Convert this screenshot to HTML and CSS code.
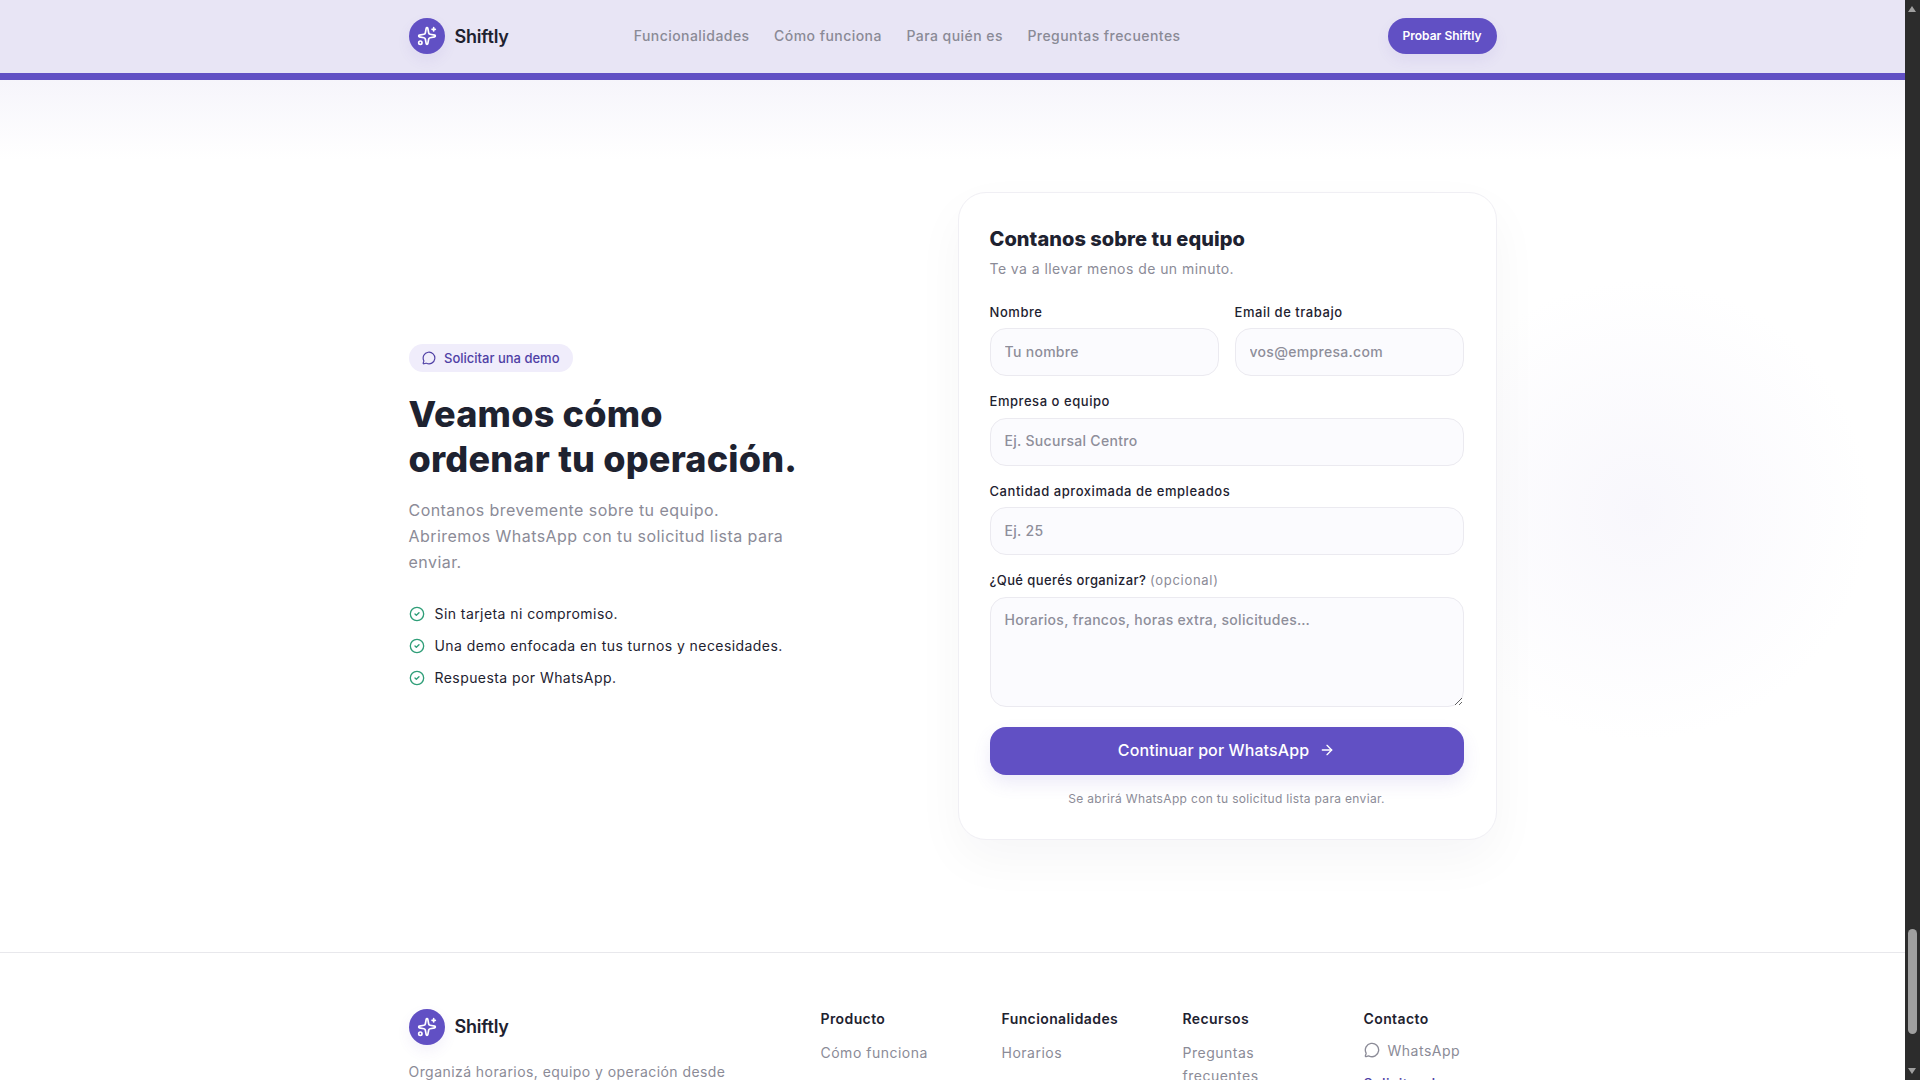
FILE: index.html
```html
<!DOCTYPE html>
<html lang="es">
<head>
    <meta charset="UTF-8">
    <meta name="viewport" content="width=device-width, initial-scale=1.0">
    <title>Shiftly - Solicitar una demo</title>
    <link rel="stylesheet" href="styles.css">
</head>
<body>
    <div class="window">
        <div class="page">
            <header class="site-header">
                <div class="container header-row">
                    <a class="brand" href="#">
                        <span class="brand-mark">
                            <svg class="icon-20" viewBox="0 0 24 24"><path d="M11.017 2.814a1 1 0 0 1 1.966 0l1.051 5.558a2 2 0 0 0 1.594 1.594l5.558 1.051a1 1 0 0 1 0 1.966l-5.558 1.051a2 2 0 0 0-1.594 1.594l-1.051 5.558a1 1 0 0 1-1.966 0l-1.051-5.558a2 2 0 0 0-1.594-1.594l-5.558-1.051a1 1 0 0 1 0-1.966l5.558-1.051a2 2 0 0 0 1.594-1.594z"/><path d="M20 2v4"/><path d="M22 4h-4"/><circle cx="4" cy="20" r="2"/></svg>
                        </span>
                        <span class="brand-name">Shiftly</span>
                    </a>
                    <nav class="main-nav">
                        <a href="#">Funcionalidades</a>
                        <a href="#">Cómo funciona</a>
                        <a href="#">Para quién es</a>
                        <a href="#">Preguntas frecuentes</a>
                    </nav>
                    <a class="header-cta" href="#">Probar Shiftly</a>
                </div>
            </header>

            <main class="demo-section">
                <div class="container demo-grid">
                    <div class="demo-intro">
                        <span class="badge">
                            <svg class="icon-14" viewBox="0 0 24 24"><path d="M2.992 16.342a2 2 0 0 1 .094 1.167l-1.065 3.29a1 1 0 0 0 1.236 1.168l3.413-.998a2 2 0 0 1 1.099.092 10 10 0 1 0-4.777-4.719"/></svg>
                            Solicitar una demo
                        </span>
                        <h1>Veamos cómo<br>ordenar tu operación.</h1>
                        <p class="lead">Contanos brevemente sobre tu equipo.<br>Abriremos WhatsApp con tu solicitud lista para enviar.</p>
                        <ul class="checks">
                            <li><svg class="icon-16" viewBox="0 0 24 24"><circle cx="12" cy="12" r="10"/><path d="m9 12 2 2 4-4"/></svg>Sin tarjeta ni compromiso.</li>
                            <li><svg class="icon-16" viewBox="0 0 24 24"><circle cx="12" cy="12" r="10"/><path d="m9 12 2 2 4-4"/></svg>Una demo enfocada en tus turnos y necesidades.</li>
                            <li><svg class="icon-16" viewBox="0 0 24 24"><circle cx="12" cy="12" r="10"/><path d="m9 12 2 2 4-4"/></svg>Respuesta por WhatsApp.</li>
                        </ul>
                    </div>

                    <form class="demo-card">
                        <h2>Contanos sobre tu equipo</h2>
                        <p class="card-sub">Te va a llevar menos de un minuto.</p>
                        <div class="field-row">
                            <div class="field">
                                <label for="nombre">Nombre</label>
                                <input id="nombre" type="text" placeholder="Tu nombre">
                            </div>
                            <div class="field">
                                <label for="email">Email de trabajo</label>
                                <input id="email" type="email" placeholder="vos@empresa.com">
                            </div>
                        </div>
                        <div class="field">
                            <label for="empresa">Empresa o equipo</label>
                            <input id="empresa" type="text" placeholder="Ej. Sucursal Centro">
                        </div>
                        <div class="field">
                            <label for="cantidad">Cantidad aproximada de empleados</label>
                            <input id="cantidad" type="text" placeholder="Ej. 25">
                        </div>
                        <div class="field">
                            <label class="label-tight" for="mensaje">¿Qué querés organizar? <span class="optional">(opcional)</span></label>
                            <textarea id="mensaje" placeholder="Horarios, francos, horas extra, solicitudes…"></textarea>
                        </div>
                        <button class="submit" type="button">
                            Continuar por WhatsApp
                            <svg class="icon-16" viewBox="0 0 24 24"><path d="M5 12h14"/><path d="m12 5 7 7-7 7"/></svg>
                        </button>
                        <p class="form-note">Se abrirá WhatsApp con tu solicitud lista para enviar.</p>
                    </form>
                </div>
            </main>

            <footer class="site-footer">
                <div class="container footer-grid">
                    <div>
                        <a class="brand" href="#">
                            <span class="brand-mark">
                                <svg class="icon-20" viewBox="0 0 24 24"><path d="M11.017 2.814a1 1 0 0 1 1.966 0l1.051 5.558a2 2 0 0 0 1.594 1.594l5.558 1.051a1 1 0 0 1 0 1.966l-5.558 1.051a2 2 0 0 0-1.594 1.594l-1.051 5.558a1 1 0 0 1-1.966 0l-1.051-5.558a2 2 0 0 0-1.594-1.594l-5.558-1.051a1 1 0 0 1 0-1.966l5.558-1.051a2 2 0 0 0 1.594-1.594z"/><path d="M20 2v4"/><path d="M22 4h-4"/><circle cx="4" cy="20" r="2"/></svg>
                            </span>
                            <span class="brand-name">Shiftly</span>
                        </a>
                        <p class="footer-text">Organizá horarios, equipo y operación desde un solo lugar.</p>
                    </div>
                    <div class="footer-col">
                        <h4>Producto</h4>
                        <a href="#">Cómo funciona</a>
                    </div>
                    <div class="footer-col">
                        <h4>Funcionalidades</h4>
                        <a href="#">Horarios</a>
                    </div>
                    <div class="footer-col">
                        <h4>Recursos</h4>
                        <a href="#">Preguntas frecuentes</a>
                    </div>
                    <div class="footer-col">
                        <h4>Contacto</h4>
                        <a class="contact-link" href="#">
                            <svg class="icon-16" viewBox="0 0 24 24"><path d="M2.992 16.342a2 2 0 0 1 .094 1.167l-1.065 3.29a1 1 0 0 0 1.236 1.168l3.413-.998a2 2 0 0 1 1.099.092 10 10 0 1 0-4.777-4.719"/></svg>
                            WhatsApp
                        </a>
                        <a class="accent-link" href="#">Solicitar demo</a>
                    </div>
                </div>
            </footer>
        </div>

        <div class="scrollbar">
            <span class="arrow-up"></span>
            <span class="thumb"></span>
            <span class="arrow-down"></span>
        </div>
    </div>
</body>
</html>
```

FILE: styles.css
```css
* { box-sizing: border-box; }
html, body { height: 100%; }
body {
    margin: 0;
    overflow: hidden;
    font-family: Inter, "Noto Sans", sans-serif;
    color: #1e2230;
    background: #fff;
}
a { color: inherit; text-decoration: none; }
svg {
    fill: none;
    stroke: currentColor;
    stroke-width: 2;
    stroke-linecap: round;
    stroke-linejoin: round;
    flex: none;
}
.icon-14 { width: 14px; height: 14px; }
.icon-16 { width: 16px; height: 16px; }
.icon-20 { width: 20px; height: 20px; }

.window { display: flex; height: 1080px; }
.page { flex: 1; min-width: 0; height: 1080px; overflow: hidden; }
.container { width: 1088px; margin: 0 auto; }

/* header */
.site-header {
    height: 80px;
    background: #e8e5f5;
    border-bottom: 7px solid #6150c4;
}
.header-row { display: flex; align-items: center; height: 72px; }
.brand { display: flex; align-items: center; gap: 10px; }
.brand-mark {
    display: flex;
    align-items: center;
    justify-content: center;
    width: 36px;
    height: 36px;
    border-radius: 50%;
    background: #6150c4;
    color: #fff;
    box-shadow: 0 6px 14px rgba(97,80,196,0.08);
}
.brand-name { font-size: 18px; font-weight: 600; letter-spacing: -0.2px; }
.main-nav {
    display: flex;
    gap: 24.5px;
    margin-left: 125px;
    padding-bottom: 2px;
    font-size: 14px;
    font-weight: 500;
    letter-spacing: 0.45px;
    color: #8a8a96;
}
.header-cta {
    margin-left: auto;
    display: flex;
    align-items: center;
    justify-content: center;
    width: 109px;
    height: 36px;
    padding-bottom: 1px;
    border-radius: 18px;
    background: #6150c4;
    color: #fff;
    font-size: 12px;
    font-weight: 600;
    box-shadow: 0 6px 14px rgba(97,80,196,0.08);
}

/* demo */
.demo-section {
    padding: 112px 0;
    background:
        radial-gradient(circle 230px at 1640px 430px, #f8f7fc, rgba(248,247,252,0)),
        linear-gradient(#f6f5fb, #fff 80px);
}
.demo-grid {
    display: grid;
    grid-template-columns: 1fr 539px;
    align-items: center;
}
.badge {
    display: inline-flex;
    align-items: center;
    gap: 8px;
    height: 28px;
    padding: 0 13.5px;
    border-radius: 14px;
    background: #f0edfb;
    color: #4f3fa5;
    font-size: 13px;
    font-weight: 500;
}
h1 {
    margin: 20px 0 0;
    font-size: 36px;
    line-height: 45px;
    font-weight: 800;
    letter-spacing: 0.2px;
}
.lead {
    max-width: 400px;
    margin: 15px 0 0;
    font-size: 16px;
    line-height: 26px;
    letter-spacing: 0.45px;
    color: #8b8b97;
}
.checks {
    display: flex;
    flex-direction: column;
    gap: 12px;
    margin: 29px 0 0;
    padding: 0;
    list-style: none;
    font-size: 14px;
    line-height: 20px;
    letter-spacing: 0.43px;
}
.checks li { display: flex; align-items: center; gap: 10px; }
.checks svg { color: #2f9e78; }

/* form card */
.demo-card {
    padding: 32px 32px 32px 31px;
    background: #fff;
    border: 1px solid #f0eff4;
    border-radius: 28px;
    box-shadow: 0 20px 50px rgba(30,34,60,0.04);
}
h2 {
    margin: 0;
    font-size: 20px;
    line-height: 28px;
    font-weight: 800;
    letter-spacing: 0.05px;
}
.card-sub {
    margin: 6px 0 23.5px;
    font-size: 14px;
    line-height: 20px;
    letter-spacing: 0.44px;
    color: #8b8b97;
}
.field-row { display: grid; grid-template-columns: 1fr 1fr; gap: 16px; }
.field { margin-bottom: 16px; }
.field-row .field { margin-bottom: 0; }
.field-row { margin-bottom: 16px; }
label {
    display: block;
    margin-bottom: 6px;
    font-size: 13px;
    line-height: 19.5px;
    font-weight: 500;
    letter-spacing: 0.55px;
}
.label-tight { letter-spacing: 0.4px; }
.optional { color: #8b8b97; font-weight: 400; letter-spacing: 0.7px; }
input, textarea {
    display: block;
    width: 100%;
    padding: 0 14px 2px;
    background: #fbfbfe;
    border: 1px solid #ebeaf0;
    border-radius: 16px;
    font: 500 14px Inter, "Noto Sans", sans-serif;
    letter-spacing: 0.3px;
    color: #1e2230;
}
input { height: 48px; }
textarea { height: 110px; padding-top: 12px; line-height: 20px; margin-bottom: 20px; }
input::placeholder, textarea::placeholder { color: #8e8e9a; opacity: 1; }
.submit {
    display: flex;
    align-items: center;
    justify-content: center;
    gap: 10px;
    width: 100%;
    height: 48px;
    padding: 0 0 2px;
    border: 0;
    border-radius: 16px;
    background: #6150c4;
    color: #fff;
    font: 500 16px Inter, "Noto Sans", sans-serif;
    letter-spacing: 0.1px;
    box-shadow: 0 8px 18px rgba(97,80,196,0.12);
}
.form-note {
    margin: 16px 0 0;
    text-align: center;
    font-size: 12px;
    line-height: 16px;
    letter-spacing: 0.33px;
    color: #8b8b97;
}

/* footer */
.site-footer { padding-top: 56px; border-top: 1px solid #e8e8ec; }
.footer-grid {
    display: grid;
    grid-template-columns: 364px repeat(4, 1fr);
    gap: 48px;
}
.footer-text {
    max-width: 325px;
    margin: 16px 0 0;
    font-size: 14px;
    line-height: 22px;
    letter-spacing: 0.44px;
    color: #8b8b97;
}
.footer-col h4 {
    margin: 0 0 12px;
    font-size: 14px;
    line-height: 20px;
    font-weight: 600;
    letter-spacing: 0.4px;
}
.footer-col a {
    display: block;
    font-size: 14px;
    line-height: 23px;
    letter-spacing: 0.5px;
    color: #8b8b97;
}
.footer-col .contact-link { display: flex; align-items: center; gap: 8px; margin-top: -2px; }
.footer-col .accent-link { margin-top: 10px; color: #4f3fa5; font-weight: 500; }

/* browser scrollbar */
.scrollbar {
    position: relative;
    flex: none;
    width: 15px;
    background: #2c2c2c;
}
.thumb {
    position: absolute;
    top: 929px;
    left: 3px;
    width: 9px;
    height: 105px;
    border-radius: 5px;
    background: #9f9f9f;
}
.arrow-up, .arrow-down {
    position: absolute;
    left: 3px;
    width: 0;
    height: 0;
    border-left: 4.5px solid transparent;
    border-right: 4.5px solid transparent;
}
.arrow-up { top: 6px; border-bottom: 6px solid #9f9f9f; }
.arrow-down { top: 1068px; border-top: 6px solid #9f9f9f; }
```
